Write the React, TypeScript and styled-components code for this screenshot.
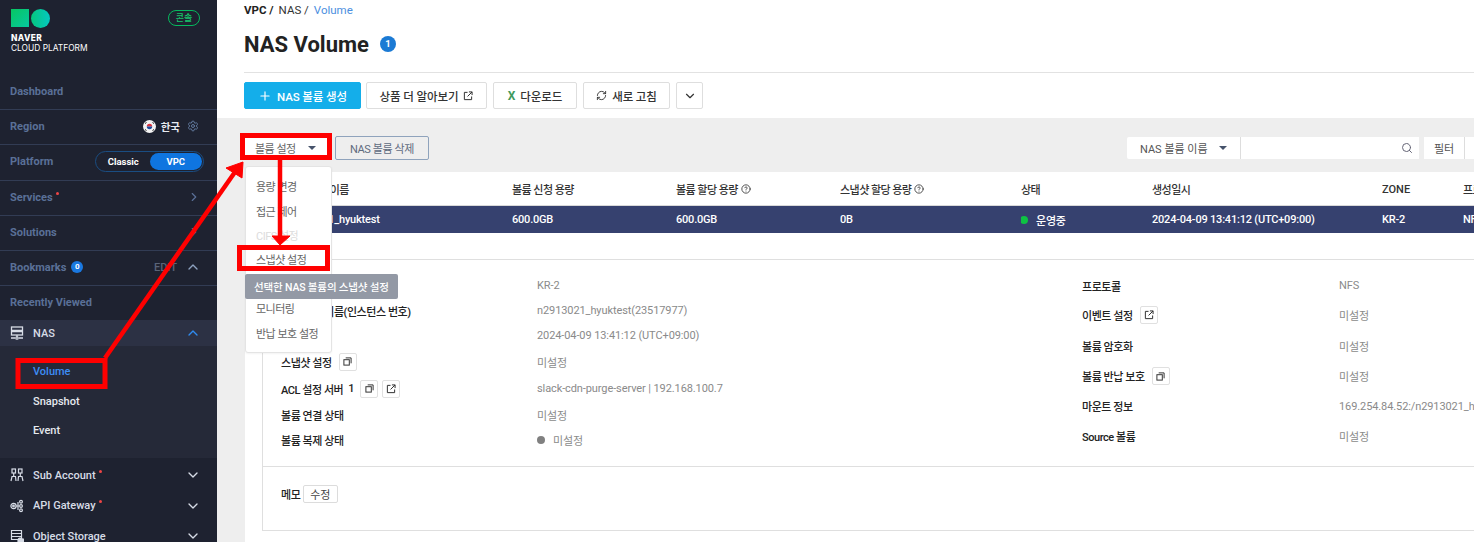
import React from "react";
import styled, { createGlobalStyle } from "styled-components";
import { ChevronDown, ChevronRight, ChevronUp, CircleHelp, Plus, RefreshCw, Search, Settings } from "lucide-react";

const Global = createGlobalStyle`
  html, body { margin: 0; padding: 0; background: #fff; overflow: hidden; }
  * { box-sizing: border-box; }
  body { font-family: Roboto, "Noto Sans CJK KR", "Liberation Sans", sans-serif; font-size: 12px; }
`;

const Page = styled.div`
  position: relative; width: 1474px; height: 542px; overflow: hidden; display: flex; background: #fff;
`;
const Sidebar = styled.aside`
  width: 217px; height: 542px; flex: none; background: #1e2230; overflow: hidden; display: flex; flex-direction: column;
`;
const LogoArea = styled.div`
  height: 73px; flex: none; padding: 9px 7px 0 11px; display: flex; justify-content: space-between; align-items: flex-start;
`;
const LogoMarks = styled.div`display: flex; gap: 2px;`;
const LogoSquare = styled.div`width: 18px; height: 18px; background: linear-gradient(135deg, #07c562, #06c9a0);`;
const LogoCircle = styled.div`width: 19px; height: 19px; border-radius: 50%; background: linear-gradient(90deg, #05c77e, #05c8c0);`;
const LogoText = styled.div`
  margin-top: 6px; color: #fff; font-family: Inter, sans-serif; font-size: 8.4px; line-height: 9.5px; letter-spacing: 0; white-space: nowrap;
  b { font-weight: 800; display: block; letter-spacing: .4px; }
`;
const ConsoleBadge = styled.div`
  width: 32px; height: 16px; margin: 1px 10px 0 0; border: 1px solid #06b95e; border-radius: 8px; color: #17c46c;
  font-size: 9px; line-height: 14px; text-align: center; font-weight: 500;
`;
const NavRow = styled.div<{ $h: number; $line?: boolean }>`
  height: ${p => p.$h}px; flex: none; padding: 0 16px 0 10px; display: flex; align-items: center; justify-content: space-between;
  color: #5a7097; font-size: 11px; font-weight: 700;
  border-bottom: ${p => (p.$line ? "1px solid #323c54" : "0")};
  & + & { padding-bottom: 2px; }
`;
const NavLeft = styled.span`display: flex; align-items: center; gap: 6px;`;
const Dot = styled.sup`
  width: 3px; height: 3px; border-radius: 50%; background: #f04545; display: inline-block; margin: -8px 0 0 -3px;
`;
const RegionSide = styled.span`display: flex; align-items: center; gap: 7px; margin-right: 2px; color: #e8ebf0; font-size: 10.5px; svg { color: #627a9e; }`;
const Flag = styled.svg`margin-right: -2px;`;
const PlatformToggle = styled.div`
  width: 109px; height: 21px; margin-right: -3px; border: 1px solid #1a4d82; border-radius: 11px; display: flex; padding: 1px; color: #fff;
  font-size: 9.5px; font-weight: 700; align-items: stretch;
`;
const ToggleItem = styled.span<{ $on?: boolean }>`
  flex: 1; display: flex; align-items: center; justify-content: center; border-radius: 9px;
  background: ${p => (p.$on ? "#0f75e0" : "transparent")};
`;
const CountBadge = styled.span`
  width: 12px; height: 12px; border-radius: 50%; background: #1a78e0; color: #fff; font-size: 8px; line-height: 12px; text-align: center; margin-left: -1px;
`;
const EditSide = styled.span`display: flex; align-items: center; gap: 8px; color: #5a6478; font-weight: 500; font-size: 11px; svg { color: #8ea2c0; }`;
const NasRow = styled.div`
  height: 26px; flex: none; background: #2c3144; padding: 0 16px 0 10px; display: flex; align-items: center; justify-content: space-between; color: #d7dce6; font-weight: 500; font-size: 11px;
  svg.up { color: #2f8bf0; }
`;
const IconLabel = styled.span`display: flex; align-items: center; gap: 9px; svg { flex: none; }`;
const SubMenu = styled.div`
  height: 112px; flex: none; background: #252938; padding-top: 11px; display: flex; flex-direction: column;
`;
const SubItem = styled.div<{ $active?: boolean }>`
  height: 29.5px; padding-left: 33px; display: flex; align-items: center; font-size: 11px; font-weight: 500;
  color: ${p => (p.$active ? "#3d8df5" : "#e6e9ef")};
`;
const ServiceList = styled.div`flex: none; padding-top: 2px;`;
const ServiceRow = styled.div`
  height: 30.5px; padding: 0 16px 0 10px; display: flex; align-items: center; justify-content: space-between; color: #d7dce6; font-weight: 500; font-size: 11px;
`;

const Main = styled.main`flex: 1; min-width: 0; display: flex; flex-direction: column; height: 542px;`;
const Top = styled.header`height: 118px; flex: none; padding-left: 27px; display: flex; flex-direction: column;`;
const Crumbs = styled.div`height: 20px; flex: none; display: flex; align-items: center; gap: 5px; color: #333; font-size: 11.5px;
  b { font-weight: 700; color: #222; } em { font-style: normal; color: #4c8fe0; }`;
const TitleRow = styled.div`height: 53px; flex: none; display: flex; align-items: center; gap: 11px; border-bottom: 1px solid #e2e2e2; padding-bottom: 4px;`;
const Title = styled.h1`margin: 0; font-size: 22px; font-weight: 700; color: #222; letter-spacing: 0;`;
const TitleBadge = styled.span`width: 16px; height: 16px; border-radius: 50%; background: #1b7ad4; color: #fff; font-size: 9.5px; font-weight: 700; line-height: 16px; text-align: center;`;
const Actions = styled.div`height: 45px; flex: none; display: flex; gap: 6px; padding-top: 9px;`;
const Btn = styled.button<{ $w: number; $primary?: boolean }>`
  width: ${p => p.$w}px; height: 27px; padding: 0; border-radius: 2px; display: flex; align-items: center; justify-content: center; gap: 5px;
  font: 500 11.5px Roboto, "Noto Sans CJK KR", sans-serif; letter-spacing: -.1px; cursor: pointer;
  background: ${p => (p.$primary ? "#14aeea" : "#fff")}; color: ${p => (p.$primary ? "#fff" : "#333")};
  border: 1px solid ${p => (p.$primary ? "#14aeea" : "#dedede")};
  margin-right: ${p => (p.$primary ? "-1px" : "0")};
`;
const XMark = styled.span`color: #3f9a5e; font-weight: 700; font-size: 12px;`;

const Band = styled.section`flex: 1; min-height: 0; background: #eee; padding-left: 27px; display: flex; flex-direction: column;`;
const BandTools = styled.div`height: 54px; flex: none; padding-top: 18px; display: flex; justify-content: space-between; align-items: flex-start;`;
const BandLeft = styled.div`display: flex; gap: 6px;`;
const SettingBtn = styled.div`
  width: 85px; height: 24px; padding: 0 13px 0 11px; background: #fff; display: flex; align-items: center; justify-content: space-between; color: #666; font-size: 11px; letter-spacing: -.5px;
`;
const Caret = styled.i`width: 0; height: 0; border-left: 4px solid transparent; border-right: 4px solid transparent; border-top: 4px solid #46536b; display: block;`;
const DeleteBtn = styled.div`
  width: 94px; height: 24px; border: 1px solid #8fa3bc; border-radius: 2px; display: flex; align-items: center; justify-content: center; color: #5f6b7e; font-size: 11px; letter-spacing: -.4px;
`;
const SearchGroup = styled.div`display: flex; gap: 5px; margin-top: 1px; height: 22px;`;
const SelectBox = styled.div`
  width: 113px; background: #fff; padding: 0 13px; display: flex; align-items: center; justify-content: space-between; color: #555; font-size: 11px; border-radius: 2px 0 0 2px;
`;
const SearchBox = styled.div`
  width: 179px; margin-left: -5px; background: #fff; border-left: 1px solid #ddd; display: flex; align-items: center; justify-content: flex-end; padding-right: 6px; color: #667;
`;
const FilterBtn = styled.div`width: 41px; background: #fff; display: flex; align-items: center; justify-content: center; color: #555; font-size: 11px; border-right: 1px solid #ddd;`;
const FilterNext = styled.div`width: 9px; margin-left: -5px; background: #fff;`;

const Sheet = styled.div`flex: 1; min-height: 0; margin-left: 1px; background: #fff; display: flex; flex-direction: column;`;
const Cols = "267px 164px 164px 181px 131px 230px 81px 100px";
const HeadRow = styled.div`
  height: 34px; flex: none; display: grid; grid-template-columns: ${Cols}; align-items: center; color: #333; font-size: 11px; font-weight: 500;
  border-bottom: 1px solid #d9d9d9; padding-top: 1px; letter-spacing: -.55px;
`;
const DataRow = styled.div`
  height: 27px; flex: none; display: grid; grid-template-columns: ${Cols}; align-items: center; background: #36416f; color: #fff; font-size: 11px; font-weight: 500; letter-spacing: -.2px;
`;
const Cell = styled.div<{ $first?: boolean; $latin?: boolean }>`
  white-space: nowrap; overflow: hidden; display: flex; align-items: center; gap: 3px; padding-left: ${p => (p.$first ? "41px" : "0")};
  ${p => (p.$latin ? "letter-spacing: 0;" : "")}
`;
const StatusDot = styled.i`width: 8px; height: 8px; border-radius: 50%; background: #0ec243; display: block; margin: 0 5px 0 -1px;`;
const Detail = styled.div`
  margin: 26px 0 11px 17px; flex: 1; min-height: 0; border: 1px solid #dfdfdf; border-right: 0; display: flex; flex-direction: column;
`;
const DetailTop = styled.div`height: 207px; flex: none; border-bottom: 1px solid #dfdfdf; padding: 13px 0 0 18px; display: grid; grid-template-columns: 801px 1fr;`;
const InfoCol = styled.div`display: flex; flex-direction: column;`;
const InfoRow = styled.div<{ $h: number; $right?: boolean }>`
  height: ${p => p.$h}px; display: grid; grid-template-columns: ${p => (p.$right ? 257 : 256)}px 1fr; align-items: center; font-size: 11px;
`;
const Label = styled.div`display: flex; align-items: center; gap: 5px; font-weight: 500; color: #222; white-space: nowrap; letter-spacing: -.45px;`;
const Value = styled.div`display: flex; align-items: center; gap: 8px; color: #8a8a8a; white-space: nowrap; letter-spacing: -.1px;`;
const GreyDot = styled.i`width: 8px; height: 8px; border-radius: 50%; background: #808080; display: block;`;
const IconBtn = styled.span<{ $ml?: number }>`
  width: 18px; height: 18px; border: 1px solid #e0e0e0; border-radius: 2px; display: inline-flex; align-items: center; justify-content: center; margin-left: ${p => p.$ml ?? 2}px; color: #333; flex: none;
`;
const Memo = styled.div`padding: 18px 0 0 18px; display: flex; align-items: center; gap: 2px; font-size: 11px; font-weight: 500; color: #222; letter-spacing: -.3px;`;
const EditBtn = styled.span`
  width: 35px; height: 18px; border: 1px solid #dcdcdc; border-radius: 2px; display: flex; align-items: center; justify-content: center; font-weight: 400; color: #444;
`;

const Menu = styled.div`
  position: absolute; left: 245px; top: 166px; width: 87px; height: 187px; background: #fff; border: 1px solid #e4e4e4; border-radius: 3px; padding-top: 7px; box-shadow: 0 1px 2px rgba(0,0,0,.05);
`;
const MenuItem = styled.div<{ $off?: boolean }>`
  height: 24.4px; padding-left: 10px; display: flex; align-items: center; font-size: 11px; letter-spacing: -.5px; white-space: nowrap; color: ${p => (p.$off ? "#dcdcdc" : "#666")};
`;
const Tip = styled.div`
  position: absolute; left: 245px; top: 274px; width: 153px; height: 25px; background: #9399a5; border-radius: 2px; color: #fff; font-size: 10.5px; letter-spacing: -.15px; font-weight: 500; display: flex; align-items: center; padding-left: 9px; white-space: nowrap;
`;
const Annotation = styled.svg`position: absolute; left: 0; top: 0; pointer-events: none;`;

const ExtIcon = () => (
  <svg width="10" height="10" viewBox="0 0 11 11" fill="none" stroke="currentColor" strokeWidth="1.1">
    <path d="M5 1.500H1.500v8h8V6M6.500 1h3.500v3.500M10 1 5 6" />
  </svg>
);
const CopyIcon = () => (
  <svg width="9" height="9" viewBox="0 0 10 10" fill="none" stroke="currentColor" strokeWidth="1.1">
    <rect x="1" y="3" width="6" height="6" />
    <path d="M3 1h6v6" />
  </svg>
);
const NasIcon = () => (
  <svg width="14" height="14" viewBox="0 0 14 14" fill="none" stroke="#d7dce6" strokeWidth="1.3">
    <rect x="1.500" y="1" width="11" height="3.400" />
    <rect x="1.500" y="5.600" width="11" height="3.400" />
    <path d="M7 9v2M1 12h4M9 12h4" />
    <circle cx="7" cy="12" r="1.200" />
  </svg>
);
const AccountIcon = () => (
  <svg width="14" height="14" viewBox="0 0 14 14" fill="none" stroke="#d7dce6" strokeWidth="1.200">
    <rect x="2" y="1" width="3.500" height="4" />
    <rect x="8.500" y="1" width="3.500" height="4" />
    <path d="M1 13l1-4.500h3.500L6 13M8 13l.5-4.500H12L13 13M3.700 5v3.500M10.300 5v3.500" />
  </svg>
);
const ApiIcon = () => (
  <svg width="14" height="14" viewBox="0 0 14 14" fill="none" stroke="#d7dce6" strokeWidth="1.200">
    <circle cx="3.500" cy="7" r="2.600" />
    <circle cx="3.500" cy="7" r=".8" />
    <path d="M6 7h3M8 3v8" />
    <circle cx="11" cy="2.800" r="1.400" />
    <circle cx="11" cy="7" r="1.400" />
    <circle cx="11" cy="11.200" r="1.400" />
  </svg>
);
const StorageIcon = () => (
  <svg width="14" height="14" viewBox="0 0 14 14" fill="none" stroke="#d7dce6" strokeWidth="1.200">
    <path d="M1.500 1.500h10v9h-10zM1.500 4.500h10M1.500 7.500h10" />
    <path d="M8 13h5a1.500 1.500 0 0 0-1-3 2.200 2.200 0 0 0-4 1z" fill="#d7dce6" />
  </svg>
);

export default function App() {
  return (
    <Page>
      <Global />
      <Sidebar>
        <LogoArea>
          <div>
            <LogoMarks><LogoSquare /><LogoCircle /></LogoMarks>
            <LogoText><b>NAVER</b>CLOUD PLATFORM</LogoText>
          </div>
          <ConsoleBadge>콘솔</ConsoleBadge>
        </LogoArea>
        <NavRow $h={37} $line>Dashboard</NavRow>
        <NavRow $h={35} $line>
          Region
          <RegionSide>
            <Flag width="13" height="13" viewBox="0 0 13 13">
              <circle cx="6.500" cy="6.500" r="6.500" fill="#f4f4f4" />
              <path d="M3.800 6.500a2.700 2.700 0 0 1 5.400 0z" fill="#d8323c" />
              <path d="M3.800 6.500a2.700 2.700 0 0 0 5.400 0z" fill="#1d4b9b" />
              <path d="M2 3.500l1.500-1M2 9.500l1.500 1M11 3.500l-1.500-1M11 9.500l-1.500 1" stroke="#222" strokeWidth="1" />
            </Flag>
            한국
            <Settings size={12} />
          </RegionSide>
        </NavRow>
        <NavRow $h={36} $line>
          Platform
          <PlatformToggle>
            <ToggleItem>Classic</ToggleItem>
            <ToggleItem $on>VPC</ToggleItem>
          </PlatformToggle>
        </NavRow>
        <NavRow $h={35} $line>
          <NavLeft>Services<Dot /></NavLeft>
          <ChevronRight size={14} />
        </NavRow>
        <NavRow $h={35} $line>
          Solutions
          <ChevronRight size={14} />
        </NavRow>
        <NavRow $h={35} $line>
          <NavLeft>Bookmarks<CountBadge>0</CountBadge></NavLeft>
          <EditSide>EDIT<ChevronUp size={16} /></EditSide>
        </NavRow>
        <NavRow $h={34}>Recently Viewed</NavRow>
        <NasRow>
          <IconLabel><NasIcon />NAS</IconLabel>
          <ChevronUp className="up" size={16} />
        </NasRow>
        <SubMenu>
          <SubItem $active>Volume</SubItem>
          <SubItem>Snapshot</SubItem>
          <SubItem>Event</SubItem>
        </SubMenu>
        <ServiceList>
          <ServiceRow>
            <IconLabel><AccountIcon /><NavLeft>Sub Account<Dot /></NavLeft></IconLabel>
            <ChevronDown size={16} />
          </ServiceRow>
          <ServiceRow>
            <IconLabel><ApiIcon /><NavLeft>API Gateway<Dot /></NavLeft></IconLabel>
            <ChevronDown size={16} />
          </ServiceRow>
          <ServiceRow>
            <IconLabel><StorageIcon />Object Storage</IconLabel>
            <ChevronDown size={16} />
          </ServiceRow>
        </ServiceList>
      </Sidebar>

      <Main>
        <Top>
          <Crumbs><b>VPC /</b><span>NAS /</span><em>Volume</em></Crumbs>
          <TitleRow><Title>NAS Volume</Title><TitleBadge>1</TitleBadge></TitleRow>
          <Actions>
            <Btn $w={117} $primary><Plus size={14} />NAS 볼륨 생성</Btn>
            <Btn $w={121}>상품 더 알아보기<ExtIcon /></Btn>
            <Btn $w={84}><XMark>X</XMark>다운로드</Btn>
            <Btn $w={87}><RefreshCw size={11} />새로 고침</Btn>
            <Btn $w={27}><ChevronDown size={14} /></Btn>
          </Actions>
        </Top>
        <Band>
          <BandTools>
            <BandLeft>
              <SettingBtn>볼륨 설정<Caret /></SettingBtn>
              <DeleteBtn>NAS 볼륨 삭제</DeleteBtn>
            </BandLeft>
            <SearchGroup>
              <SelectBox>NAS 볼륨 이름<Caret /></SelectBox>
              <SearchBox><Search size={12} /></SearchBox>
              <FilterBtn>필터</FilterBtn>
              <FilterNext />
            </SearchGroup>
          </BandTools>
          <Sheet>
            <HeadRow>
              <Cell $first>NAS 볼륨 이름</Cell>
              <Cell>볼륨 신청 용량</Cell>
              <Cell>볼륨 할당 용량 <CircleHelp size={10} /></Cell>
              <Cell>스냅샷 할당 용량 <CircleHelp size={10} /></Cell>
              <Cell>상태</Cell>
              <Cell>생성일시</Cell>
              <Cell $latin>ZONE</Cell>
              <Cell>프로토콜</Cell>
            </HeadRow>
            <DataRow>
              <Cell $first>n2913021_hyuktest</Cell>
              <Cell>600.0GB</Cell>
              <Cell>600.0GB</Cell>
              <Cell>0B</Cell>
              <Cell><StatusDot />운영중</Cell>
              <Cell>2024-04-09 13:41:12 (UTC+09:00)</Cell>
              <Cell>KR-2</Cell>
              <Cell>NFS</Cell>
            </DataRow>
            <Detail>
              <DetailTop>
                <InfoCol>
                  <InfoRow $h={25}><Label>ZONE</Label><Value>KR-2</Value></InfoRow>
                  <InfoRow $h={25}><Label>연결 서버 이름(인스턴스 번호)</Label><Value>n2913021_hyuktest(23517977)</Value></InfoRow>
                  <InfoRow $h={25}><Label>생성 일시</Label><Value>2024-04-09 13:41:12 (UTC+09:00)</Value></InfoRow>
                  <InfoRow $h={27}><Label>스냅샷 설정<IconBtn><CopyIcon /></IconBtn></Label><Value>미설정</Value></InfoRow>
                  <InfoRow $h={27}><Label>ACL 설정 서버 <span>1</span><IconBtn $ml={1}><CopyIcon /></IconBtn><IconBtn $ml={-1}><ExtIcon /></IconBtn></Label><Value>slack-cdn-purge-server | 192.168.100.7</Value></InfoRow>
                  <InfoRow $h={25}><Label>볼륨 연결 상태</Label><Value>미설정</Value></InfoRow>
                  <InfoRow $h={25}><Label>볼륨 복제 상태</Label><Value><GreyDot />미설정</Value></InfoRow>
                </InfoCol>
                <InfoCol>
                  <InfoRow $right $h={25}><Label>프로토콜</Label><Value>NFS</Value></InfoRow>
                  <InfoRow $right $h={33}><Label>이벤트 설정<IconBtn><ExtIcon /></IconBtn></Label><Value>미설정</Value></InfoRow>
                  <InfoRow $right $h={30}><Label>볼륨 암호화</Label><Value>미설정</Value></InfoRow>
                  <InfoRow $right $h={30}><Label>볼륨 반납 보호<IconBtn><CopyIcon /></IconBtn></Label><Value>미설정</Value></InfoRow>
                  <InfoRow $right $h={30}><Label>마운트 정보</Label><Value>169.254.84.52:/n2913021_hyuktest</Value></InfoRow>
                  <InfoRow $right $h={29}><Label>Source 볼륨</Label><Value>미설정</Value></InfoRow>
                </InfoCol>
              </DetailTop>
              <Memo>메모<EditBtn>수정</EditBtn></Memo>
            </Detail>
          </Sheet>
        </Band>
      </Main>

      <Menu>
        <MenuItem>용량 변경</MenuItem>
        <MenuItem>접근 제어</MenuItem>
        <MenuItem $off>CIFS 설정</MenuItem>
        <MenuItem>스냅샷 설정</MenuItem>
        <MenuItem>복제 설정</MenuItem>
        <MenuItem>모니터링</MenuItem>
        <MenuItem>반납 보호 설정</MenuItem>
      </Menu>
      <Tip>선택한 NAS 볼륨의 스냅샷 설정</Tip>

      <Annotation width="1474" height="542" viewBox="0 0 1474 542" fill="none">
        <rect x="18" y="360.500" width="87" height="26" stroke="#f00" strokeWidth="5" />
        <rect x="242.500" y="135.500" width="87" height="22" stroke="#f00" strokeWidth="5" />
        <rect x="239.500" y="247.500" width="88" height="21" stroke="#f00" strokeWidth="5" />
        <path d="M105 358 L235 172" stroke="#f00" strokeWidth="4.500" />
        <path d="M243 162 L226 168 L242 178 Z" fill="#f00" stroke="#f00" />
        <path d="M280 158 V240" stroke="#f00" strokeWidth="4.500" />
        <path d="M272 236 H290 L280 245 Z" fill="#f00" stroke="#f00" />
      </Annotation>
    </Page>
  );
}
